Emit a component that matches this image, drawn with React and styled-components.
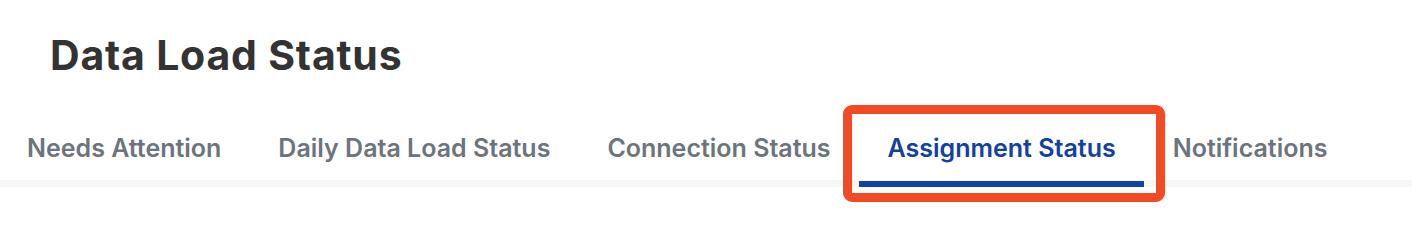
import styled, { createGlobalStyle } from "styled-components";

const GlobalStyle = createGlobalStyle`
  html, body {
    margin: 0;
    padding: 0;
    background: #ffffff;
    font-family: Inter, "Noto Sans", sans-serif;
  }
`;

const Page = styled.div`
  width: 1412px;
  height: 212px;
  display: flex;
  flex-direction: column;
  overflow: hidden;
`;

const Title = styled.h1`
  margin: 0;
  padding: 30px 0 0 50px;
  font-size: 41px;
  line-height: 50px;
  font-weight: 700;
  letter-spacing: 0.8px;
  color: #333333;
`;

const TabBar = styled.div`
  margin-top: 53px;
  display: flex;
  align-items: flex-start;
  border-bottom: 7px solid #f7f7f7;
`;

const Tab = styled.div`
  position: relative;
  padding: 0 28.5px ${(p) => (p.$active ? "18px" : "17px")};
  margin-bottom: ${(p) => (p.$active ? "-7px" : "0")};
  border-bottom: ${(p) => (p.$active ? "6px solid #0e45a3" : "none")};
  font-size: 25px;
  line-height: 30px;
  font-weight: 600;
  white-space: nowrap;
  color: ${(p) => (p.$active ? "#1241a3" : "#6c747d")};
  &:first-child {
    padding-left: 27px;
  }
`;

// red annotation frame around the active tab
const Highlight = styled.div`
  position: absolute;
  left: -16px;
  right: -21px;
  top: -28px;
  bottom: -21px;
  border: 9px solid #f24a24;
  border-radius: 9px;
  pointer-events: none;
`;

const tabs = [
  "Needs Attention",
  "Daily Data Load Status",
  "Connection Status",
  "Assignment Status",
  "Notifications",
];

export default function App() {
  return (
    <Page>
      <GlobalStyle />
      <Title>Data Load Status</Title>
      <TabBar>
        {tabs.map((t) => (
          <Tab key={t} $active={t === "Assignment Status"}>
            {t}
            {t === "Assignment Status" && <Highlight />}
          </Tab>
        ))}
      </TabBar>
    </Page>
  );
}
